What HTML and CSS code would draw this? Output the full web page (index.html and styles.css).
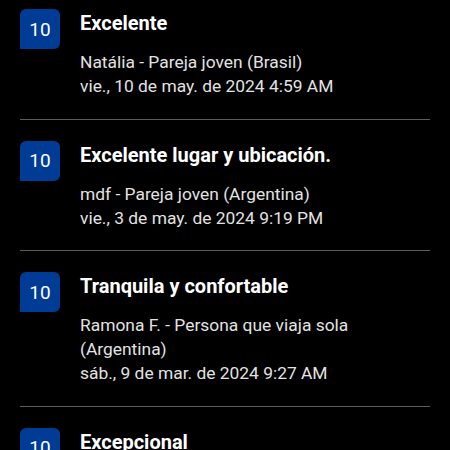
FILE: index.html
```html
<!DOCTYPE html>
<html lang="es">
<head>
<meta charset="utf-8">
<link rel="stylesheet" href="styles.css">
</head>
<body>
<ul class="reviews">
  <li class="review">
    <div class="score">10</div>
    <div class="content">
      <div class="title">Excelente</div>
      <div class="meta">
        <div>Natália - Pareja joven (Brasil)</div>
        <div>vie., 10 de may. de 2024 4:59 AM</div>
      </div>
    </div>
  </li>
  <li class="review">
    <div class="score">10</div>
    <div class="content">
      <div class="title">Excelente lugar y ubicación.</div>
      <div class="meta">
        <div>mdf - Pareja joven (Argentina)</div>
        <div>vie., 3 de may. de 2024 9:19 PM</div>
      </div>
    </div>
  </li>
  <li class="review">
    <div class="score">10</div>
    <div class="content">
      <div class="title">Tranquila y confortable</div>
      <div class="meta">
        <div>Ramona F. - Persona que viaja sola (Argentina)</div>
        <div>sáb., 9 de mar. de 2024 9:27 AM</div>
      </div>
    </div>
  </li>
  <li class="review">
    <div class="score">10</div>
    <div class="content">
      <div class="title">Excepcional</div>
      <div class="meta">
        <div>Usuario - Familia</div>
        <div>lun., 4 de mar. de 2024 10:12 AM</div>
      </div>
    </div>
  </li>
</ul>
</body>
</html>
```
FILE: styles.css
```css
html, body {
  margin: 0;
  padding: 0;
  background: #000;
  overflow: hidden;
}
body {
  font-family: Roboto, "Noto Sans", sans-serif;
  color: #fff;
  width: 450px;
  height: 450px;
}
.reviews {
  list-style: none;
  margin: -12px 0 0 0;
  padding: 0 20px;
}
.review {
  display: flex;
  gap: 20px;
  padding: 21px 0 20.5px;
  border-bottom: 1px solid #5c5c5c;
}
.score {
  flex: 0 0 auto;
  width: 40px;
  height: 40px;
  background: #003b95;
  border-radius: 6px 6px 6px 0;
  color: #fff;
  font-size: 19px;
  display: flex;
  align-items: center;
  justify-content: center;
}
.content {
  flex: 1 1 auto;
  min-width: 0;
  padding-right: 10px;
}
.title {
  font-size: 20px;
  font-weight: 700;
  line-height: 28px;
}
.meta {
  margin-top: 13px;
  font-size: 17.4px;
  line-height: 24px;
  color: #e2e2e2;
}
```
